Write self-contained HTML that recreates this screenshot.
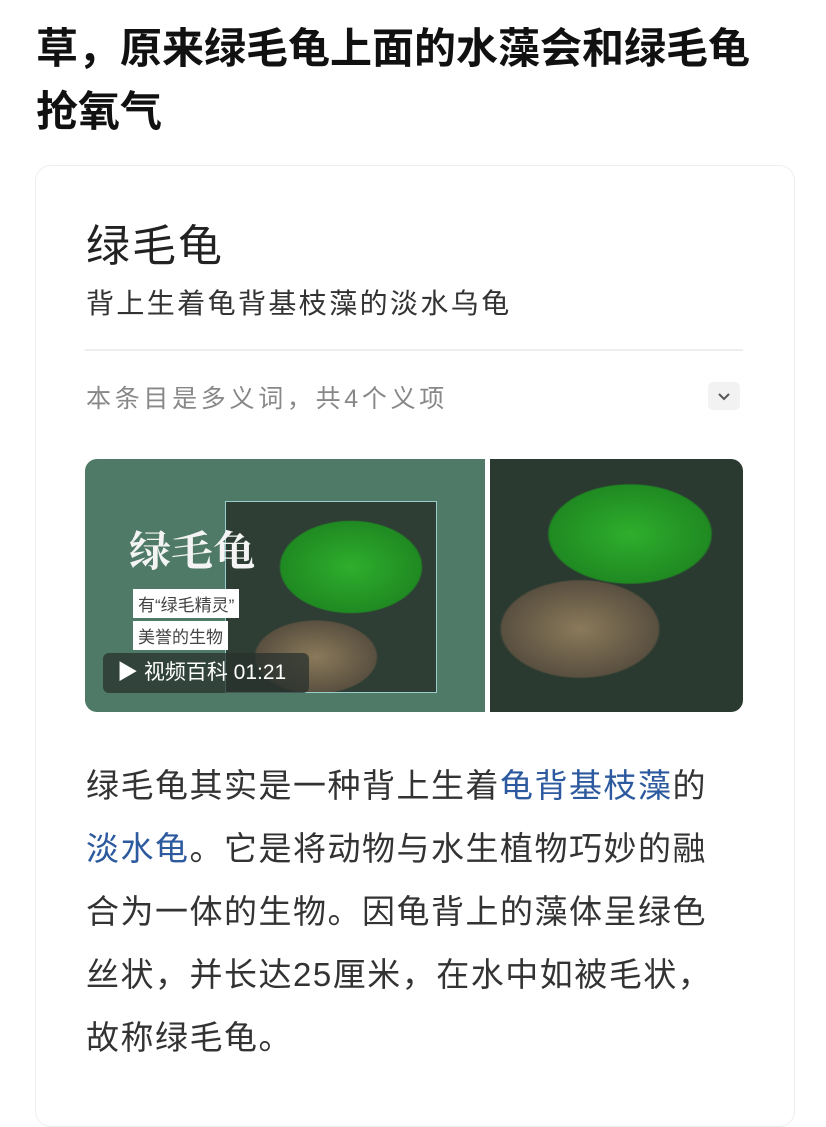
<!DOCTYPE html>
<html><head><meta charset="utf-8"><style>
body{margin:0;width:826px;height:1079px;background:#fff;overflow:hidden;font-family:"Liberation Sans","Noto Sans CJK SC",sans-serif;position:relative}
.h{position:absolute;left:36px;top:17px;font-size:42px;font-weight:bold;line-height:63px;color:#111;width:790px;white-space:nowrap}
.card{position:absolute;left:35px;top:165px;width:758px;height:960px;border:1px solid #eee;border-radius:16px}
.t{position:absolute;left:86px;top:210px;font-size:44px;letter-spacing:2px;color:#222}
.s{position:absolute;left:86px;top:282px;font-size:28px;letter-spacing:2.4px;color:#333}
.d{position:absolute;left:85px;top:349px;width:658px;height:2px;background:#eee}
.m{position:absolute;left:86px;top:379px;font-size:25px;letter-spacing:3.7px;color:#888}
.ch{position:absolute;left:708px;top:382px;width:32px;height:28px;background:#f2f2f2;border-radius:5px}
.im1{position:absolute;left:85px;top:459px;width:400px;height:253px;border-radius:12px 0 0 12px;background:#4f7a68;overflow:hidden}
.im2{position:absolute;left:490px;top:459px;width:253px;height:253px;border-radius:0 12px 12px 0;overflow:hidden;background:radial-gradient(ellipse 115px 70px at 140px 75px,#2fae2c 0%,#1f8a22 70%,transparent 72%),radial-gradient(ellipse 130px 80px at 90px 170px,#8a7a5a 0%,#5a5040 60%,transparent 62%),#2a3a30}
.b{position:absolute;left:86px;top:754px;font-size:33px;letter-spacing:1.5px;line-height:63px;color:#333;white-space:nowrap}
a{color:#2d5a9e;text-decoration:none}
</style></head><body>
<div class="h">草，原来绿毛龟上面的水藻会和绿毛龟<br>抢氧气</div>
<div class="card"></div>
<div class="t">绿毛龟</div>
<div class="s">背上生着龟背基枝藻的淡水乌龟</div>
<div class="d"></div>
<div class="m">本条目是多义词，共4个义项</div>
<div class="ch"><svg width="32" height="28"><path d="M11 12l5 5 5-5" stroke="#555" stroke-width="2" fill="none"/></svg></div>
<div class="im1">
<div style="position:absolute;left:140px;top:42px;width:210px;height:190px;background:radial-gradient(ellipse 100px 65px at 125px 65px,#2fae2c 0%,#1f8a22 70%,transparent 72%),radial-gradient(ellipse 100px 60px at 90px 155px,#8a7a5a 0%,#5a5040 60%,transparent 62%),#2e3e34;border:1px solid #9cc"></div>
<div style="position:absolute;left:44px;top:60px;font-size:42px;font-weight:bold;color:#f4f4f4;font-family:'Noto Serif CJK SC',serif">绿毛龟</div>
<div style="position:absolute;left:48px;top:130px;background:#fff;color:#444;font-size:17px;padding:2px 5px">有“绿毛精灵”</div>
<div style="position:absolute;left:48px;top:162px;background:#fff;color:#444;font-size:17px;padding:2px 5px">美誉的生物</div>
<div style="position:absolute;left:18px;top:194px;width:206px;height:40px;background:rgba(40,50,45,.75);border-radius:6px;color:#fff;font-size:21px;line-height:40px;padding-left:14px;box-sizing:border-box">▶ 视频百科 01:21</div>
</div>
<div class="im2"></div>
<div class="b">绿毛龟其实是一种背上生着<a>龟背基枝藻</a>的<br><a>淡水龟</a>。它是将动物与水生植物巧妙的融<br>合为一体的生物。因龟背上的藻体呈绿色<br>丝状，并长达25厘米，在水中如被毛状，<br>故称绿毛龟。</div>
</body></html>
